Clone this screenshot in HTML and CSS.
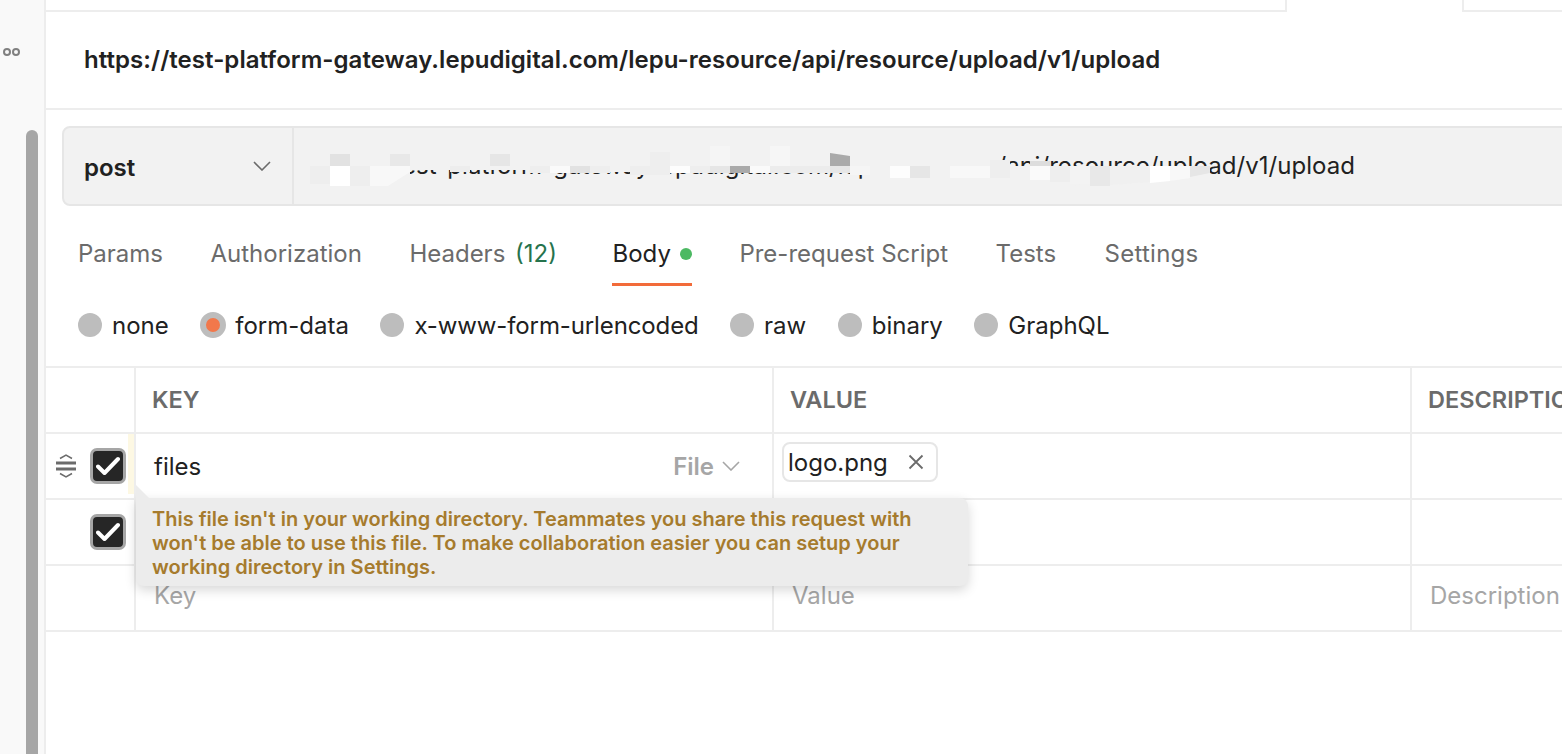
FILE: index.html
```html
<!DOCTYPE html>
<html lang="en">
<head>
  <meta charset="UTF-8" />
  <title>Postman request</title>
  <link rel="stylesheet" href="styles.css">
</head>
<body>

<div class="app">
  <aside class="sidebar">
    <div class="side-dots">
      <span class="side-dot"></span>
      <span class="side-dot"></span>
    </div>
    <div class="side-scroll"></div>
  </aside>

  <main class="main">
    <div class="tabstrip">
      <div class="tab-rest"></div>
      <div class="tab-active"></div>
      <div class="tab-next"></div>
    </div>

    <div class="title-row">https://test-platform-gateway.lepudigital.com/lepu-resource/api/resource/upload/v1/upload</div>

    <div class="request-bar">
      <div class="method">
        <span>post</span>
        <svg class="method-caret" width="18" height="10" viewBox="0 0 18 10"><path d="M1 1l8 8 8-8" fill="none" stroke="#6b6b6b" stroke-width="1.6"/></svg>
      </div>
      <div class="url-input">
        <span class="url-text">https://test-platform-gateway.lepudigital.com/lepu-resource/api/resource/upload/v1/upload</span>
        <!-- mosaic the user put over the host name -->
        <svg class="mosaic" width="920" height="50" viewBox="0 0 920 50">
          <path d="M0 8H560V30H0z M230 30H560V32H230z M0 26H100V46H0z M560 8H690V19H560z M560 21H700V46H560z M700 26H900V34L850 42L740 46H700z" fill="#f2f2f2"/>
          <rect x="0" y="26" width="20" height="18" fill="#eeeeee"/>
          <rect x="20" y="14" width="20" height="12" fill="#e2e2e2"/>
          <rect x="20" y="26" width="20" height="20" fill="#ffffff"/>
          <rect x="40" y="26" width="20" height="20" fill="#eeeeee"/>
          <path d="M60 26H100V32L78 46H60z" fill="#f8f8f8"/>
          <rect x="80" y="14" width="20" height="12" fill="#e8e8e8"/>
          <rect x="140" y="26" width="20" height="6" fill="#ededed"/>
          <rect x="180" y="14" width="20" height="12" fill="#e6e6e6"/>
          <rect x="220" y="26" width="20" height="7" fill="#eeeeee"/>
          <rect x="240" y="26" width="20" height="7" fill="#fafafa"/>
          <rect x="260" y="26" width="20" height="7" fill="#e2e2e2"/>
          <rect x="280" y="26" width="20" height="7" fill="#eeeeee"/>
          <rect x="320" y="26" width="20" height="9" fill="#eeeeee"/>
          <rect x="340" y="12" width="20" height="23" fill="#eeeeee"/>
          <rect x="360" y="26" width="20" height="7" fill="#fdfdfd"/>
          <rect x="380" y="26" width="20" height="7" fill="#eeeeee"/>
          <rect x="400" y="6" width="20" height="20" fill="#f5f5f5"/>
          <rect x="400" y="26" width="20" height="7" fill="#e6e6e6"/>
          <rect x="420" y="26" width="20" height="7" fill="#aaaaaa"/>
          <rect x="440" y="26" width="20" height="7" fill="#fafafa"/>
          <rect x="460" y="6" width="20" height="20" fill="#f6f6f6"/>
          <rect x="460" y="26" width="60" height="7" fill="#ececec"/>
          <path d="M520 13L540 16V26H520z" fill="#aaaaaa"/>
          <rect x="520" y="26" width="20" height="7" fill="#e6e6e6"/>
          <rect x="540" y="26" width="20" height="9" fill="#f5f5f5"/>
          <rect x="580" y="26" width="20" height="12" fill="#fdfdfd"/>
          <rect x="600" y="26" width="20" height="12" fill="#e6e6e6"/>
          <rect x="640" y="26" width="40" height="12" fill="#f8f8f8"/>
          <rect x="680" y="20" width="20" height="18" fill="#eeeeee"/>
          <rect x="720" y="21" width="20" height="5" fill="#dddddd"/>
          <rect x="720" y="26" width="20" height="14" fill="#fafafa"/>
          <rect x="740" y="26" width="20" height="16" fill="#eeeeee"/>
          <rect x="760" y="26" width="20" height="18" fill="#f3f3f3"/>
          <rect x="780" y="26" width="20" height="20" fill="#e8e8e8"/>
          <path d="M800 26H840V42L800 45z" fill="#f0f0f0"/>
          <path d="M840 26H860V41L840 43z" fill="#ffffff"/>
          <path d="M860 26H880V38L860 41z" fill="#f8f8f8"/>
          <path d="M880 26H900V33L880 37z" fill="#e6e6e6"/>
        </svg>
      </div>
    </div>

    <nav class="req-tabs">
      <a class="req-tab">Params</a>
      <a class="req-tab">Authorization</a>
      <a class="req-tab">Headers <span class="count">(12)</span></a>
      <a class="req-tab is-active">Body<span class="green-dot"></span></a>
      <a class="req-tab">Pre-request Script</a>
      <a class="req-tab">Tests</a>
      <a class="req-tab">Settings</a>
    </nav>

    <div class="body-types">
      <label class="radio"><span class="radio-mark"></span>none</label>
      <label class="radio is-on"><span class="radio-mark"></span>form-data</label>
      <label class="radio radio-long"><span class="radio-mark"></span>x-www-form-urlencoded</label>
      <label class="radio"><span class="radio-mark"></span>raw</label>
      <label class="radio"><span class="radio-mark"></span>binary</label>
      <label class="radio"><span class="radio-mark"></span>GraphQL</label>
    </div>

    <div class="kv-table">
      <div class="kv-row kv-head">
        <div class="cell cell-handle"></div>
        <div class="cell">KEY</div>
        <div class="cell">VALUE</div>
        <div class="cell">DESCRIPTION</div>
      </div>

      <div class="kv-row">
        <div class="cell cell-handle has-warning">
          <svg class="grip" width="20" height="24" viewBox="0 0 20 24">
            <path d="M4 4.500l6-3.500 6 3.500M4 19.500l6 3.500 6-3.500" fill="none" stroke="#6b6b6b" stroke-width="1.500"/>
            <path d="M0 9h20M0 15h20" stroke="#6b6b6b" stroke-width="3"/>
          </svg>
          <span class="check"><svg width="24" height="20" viewBox="0 0 24 20"><path d="M2 10.500l6.500 6.500L22 3" fill="none" stroke="#fff" stroke-width="4" stroke-linecap="round" stroke-linejoin="round"/></svg></span>
        </div>
        <div class="cell cell-key">
          <span>files</span>
          <span class="type-pick">File
            <svg width="18" height="10" viewBox="0 0 18 10"><path d="M1 1l8 8 8-8" fill="none" stroke="#a6a6a6" stroke-width="1.600"/></svg>
          </span>
        </div>
        <div class="cell cell-value">
          <span class="file-chip">logo.png
            <svg width="16" height="16" viewBox="0 0 16 16"><path d="M1.500 1.500l13 13M14.500 1.500l-13 13" stroke="#6b6b6b" stroke-width="1.800"/></svg>
          </span>
        </div>
        <div class="cell"></div>
      </div>

      <div class="kv-row">
        <div class="cell cell-handle">
          <span class="check"><svg width="24" height="20" viewBox="0 0 24 20"><path d="M2 10.500l6.500 6.500L22 3" fill="none" stroke="#fff" stroke-width="4" stroke-linecap="round" stroke-linejoin="round"/></svg></span>
        </div>
        <div class="cell"></div>
        <div class="cell"></div>
        <div class="cell"></div>
      </div>

      <div class="kv-row kv-empty">
        <div class="cell cell-handle"></div>
        <div class="cell">Key</div>
        <div class="cell">Value</div>
        <div class="cell">Description</div>
      </div>

      <div class="warn-tip">
        <span class="warn-arrow"></span>
        This file isn't in your working directory. Teammates you share this request with won't be able to use this file. To make collaboration easier you can setup your working directory in Settings.
      </div>
    </div>
  </main>
</div>

</body>
</html>
```

FILE: styles.css
```css
html, body {
  margin: 0;
  height: 100%;
  overflow: hidden;
}

body {
  font-family: Inter, "Liberation Sans", sans-serif;
  background: #fff;
  color: #212121;
}

.app {
  display: flex;
  height: 754px;
  width: 1562px;
  overflow: hidden;
}

/* left rail */
.sidebar {
  flex: 0 0 44px;
  display: flex;
  flex-direction: column;
  align-items: flex-start;
  background: #f9f9f9;
  border-right: 2px solid #ededed;
}

.side-dots {
  display: flex;
  gap: 1px;
  margin: 48px 0 0 3px;
  height: 10px;
}

.side-dot {
  width: 8px;
  height: 8px;
  box-sizing: border-box;
  border: 2px solid #808080;
  border-radius: 50%;
}

.side-scroll {
  width: 12px;
  flex: 1;
  margin: 72px 0 0 26px;
  background: #a6a6a6;
  border-radius: 6px 6px 0 0;
}

.main {
  flex: 1;
  min-width: 0;
}

/* tabs cut off at the top */
.tabstrip {
  display: flex;
  height: 12px;
}

.tab-rest {
  width: 1239px;
  border-right: 2px solid #ededed;
  border-bottom: 2px solid #ededed;
}

.tab-active {
  width: 175px;
}

.tab-next {
  flex: 1;
  border-left: 2px solid #ededed;
  border-bottom: 2px solid #ededed;
}

.title-row {
  height: 96px;
  line-height: 95px;
  padding-left: 38px;
  font-size: 24px;
  font-weight: 600;
  letter-spacing: 0.05px;
  border-bottom: 2px solid #ededed;
}

.request-bar {
  display: flex;
  height: 76px;
  margin: 16px 0 0 16px;
  width: 1600px;
  background: #f2f2f2;
  border: 2px solid #e6e6e6;
  border-radius: 8px;
}

.method {
  flex: 0 0 230px;
  box-sizing: border-box;
  display: flex;
  align-items: center;
  justify-content: space-between;
  padding: 2px 21px 0 20px;
  font-size: 24px;
  font-weight: 600;
  border-right: 2px solid #e6e6e6;
}

.method-caret {
  margin-top: -3px;
}

.url-input {
  position: relative;
  flex: 1;
  padding-left: 19px;
  font-size: 24px;
  line-height: 76px;
  letter-spacing: 0.06px;
}

.mosaic {
  position: absolute;
  left: 16px;
  top: 12px;
}

.url-text {
  white-space: nowrap;
}

/* request tabs */
.req-tabs {
  display: flex;
  gap: 47.5px;
  height: 80px;
  padding-left: 32px;
}

.req-tab {
  display: flex;
  align-items: center;
  height: 80px;
  box-sizing: border-box;
  padding-top: 18px;
  font-size: 24px;
  color: #6b6b6b;
  white-space: pre;
  border-bottom: 3px solid transparent;
}

.req-tab.is-active {
  margin-left: 8px;
  color: #212121;
  border-bottom-color: #f26b3a;
}

.req-tab:last-child {
  margin-left: 1px;
  letter-spacing: 0.25px;
}

.count {
  margin-left: 3px;
  color: #26734d;
}

.green-dot {
  width: 12px;
  height: 12px;
  margin-left: 9px;
  border-radius: 50%;
  background: #4cb963;
}

/* body type radios */
.body-types {
  display: flex;
  gap: 31.5px;
  height: 80px;
  box-sizing: border-box;
  padding-bottom: 2px;
  align-items: center;
  padding-left: 32px;
  font-size: 24px;
}

.radio {
  display: flex;
  align-items: center;
  gap: 10px;
}

.radio-long {
  letter-spacing: -0.12px;
}

.radio-mark {
  width: 24px;
  height: 24px;
  border-radius: 50%;
  background: #bdbdbd;
}

.radio.is-on {
  gap: 9px;
}

.radio.is-on .radio-mark {
  width: 14px;
  height: 14px;
  border: 6px solid #bdbdbd;
  background: #f2784b;
}

/* key / value table */
.kv-table {
  position: relative;
  border-top: 2px solid #ededed;
  font-size: 24px;
}

.kv-row {
  display: grid;
  grid-template-columns: 90px 638px 638px 1fr;
  height: 64px;
  border-bottom: 2px solid #ededed;
}

.cell {
  display: flex;
  align-items: center;
  padding-left: 16px;
  border-right: 2px solid #ededed;
  white-space: nowrap;
  overflow: hidden;
}

.cell:last-child {
  border-right: 0;
}

.kv-head .cell {
  padding-bottom: 2px;
  font-weight: 600;
  font-size: 23.5px;
  color: #6b6b6b;
}

.kv-empty .cell {
  color: #a6a6a6;
  padding-left: 18px;
  padding-bottom: 6px;
}

.cell-handle {
  position: relative;
  box-sizing: border-box;
  padding-left: 10px;
}

.has-warning::after {
  content: "";
  position: absolute;
  right: 0;
  top: 0;
  width: 6px;
  height: 60px;
  background: #fdf8e3;
}

.grip {
  flex: none;
}

.check {
  position: absolute;
  left: 44px;
  top: 14px;
  width: 36px;
  height: 36px;
  box-sizing: border-box;
  display: flex;
  align-items: center;
  justify-content: center;
  background: #262626;
  border: 3px solid #a6a6a6;
  border-radius: 7px;
}

.cell-key {
  justify-content: space-between;
  padding: 0 32px 0 18px;
}

.type-pick {
  display: flex;
  align-items: center;
  gap: 8px;
  color: #a6a6a6;
  font-weight: 600;
}

.cell-value {
  padding-left: 8px;
  align-items: flex-start;
}

.file-chip {
  display: flex;
  align-items: center;
  justify-content: space-between;
  box-sizing: border-box;
  width: 156px;
  height: 40px;
  margin-top: 8px;
  padding: 0 12px 0 4px;
  border: 2px solid #e6e6e6;
  border-radius: 8px;
}

/* warning popover */
.warn-tip {
  position: absolute;
  left: 90px;
  top: 130px;
  width: 832px;
  height: 88px;
  box-sizing: border-box;
  padding: 9px 16px;
  font-size: 20px;
  line-height: 24px;
  font-weight: 600;
  color: #a67b2d;
  background: #ececec;
  border-radius: 0 8px 8px 8px;
  box-shadow: 0 4px 12px rgba(0, 0, 0, 0.16);
}

.warn-arrow {
  position: absolute;
  left: 0;
  top: -13px;
  width: 0;
  height: 0;
  border-left: 13px solid #ececec;
  border-top: 13px solid transparent;
}
```
